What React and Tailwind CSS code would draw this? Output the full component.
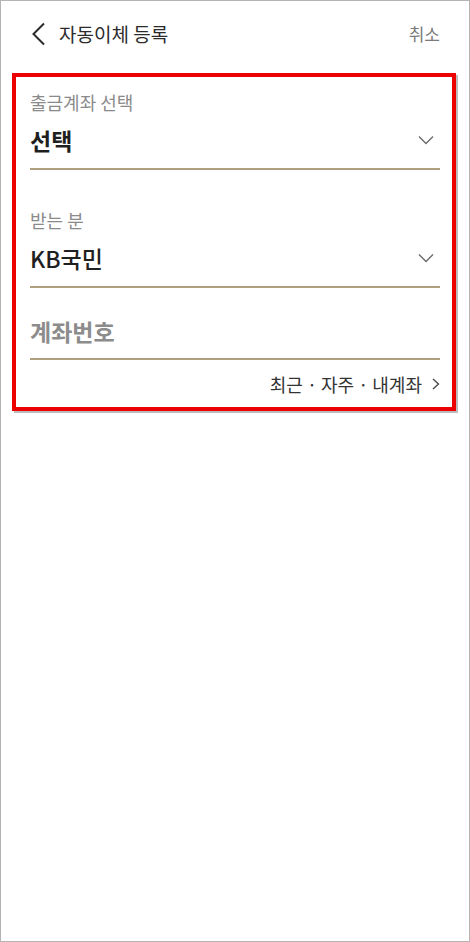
import { useState } from "react";

const FONT = { fontFamily: '"Noto Sans CJK KR", "Noto Sans", sans-serif' };

function ChevronDown() {
  return (
    <svg width="16" height="10" viewBox="0 0 16 10" fill="none" className="shrink-0">
      <path d="M1 1.5 L8 8.5 L15 1.5" stroke="#6b6b6b" strokeWidth="1.4" />
    </svg>
  );
}

function SelectField({ label, value, top, weight }) {
  return (
    <div className={top}>
      <div className="h-[24px] text-[18px] leading-[24px] text-[#8a8a8a]">{label}</div>
      <div className="mt-[11px] flex items-center justify-between border-b-2 border-[#ae9f7e] pb-[13px] pr-[6px]">
        <span className={`h-[30px] text-[23px] leading-[30px] text-[#1f1f1f] ${weight}`}>{value}</span>
        <ChevronDown />
      </div>
    </div>
  );
}

export default function App() {
  const [account, setAccount] = useState("");

  return (
    <div style={FONT} className="h-[942px] w-[470px] border border-[#b4b4b4] bg-white">
      {/* Header */}
      <div className="flex h-[72px] items-start justify-between pl-[30px] pr-[29px] pt-[19px]">
        <div className="flex items-center gap-[13px]">
          <svg width="15" height="24" viewBox="0 0 15 24" fill="none">
            <path d="M13 1.5 L2.5 12 L13 22.5" stroke="#2b2b2b" strokeWidth="2" />
          </svg>
          <span className="text-[19px] leading-[28px] text-[#2b2b2b]">자동이체 등록</span>
        </div>
        <button className="text-[17px] leading-[28px] text-[#7a7a7a]">취소</button>
      </div>

      {/* Transfer form */}
      <div className="ml-[11px] w-[444px] border-4 border-[#ec0000] pb-[11px] pl-[14px] pr-[12px] shadow-[2px_2px_0_#bdbdbd]">
        <SelectField label="출금계좌 선택" value="선택" top="pt-[13px]" weight="font-bold" />
        <SelectField label="받는 분" value="KB국민" top="mt-[38px]" weight="font-medium" />

        <div className="mt-[28px] border-b-2 border-[#ae9f7e] pb-[12px]">
          <input
            value={account}
            onChange={(e) => setAccount(e.target.value)}
            placeholder="계좌번호"
            className="h-[30px] w-full text-[23px] font-semibold leading-[30px] text-[#1f1f1f] outline-none placeholder:text-[#8c8c8c]"
          />
        </div>

        <div className="mt-[12px] flex items-center justify-end gap-[10px] text-[18px] leading-[24px] text-[#333]">
          <span>최근 · 자주 · 내계좌</span>
          <svg width="8" height="12" viewBox="0 0 8 12" fill="none">
            <path d="M1 1 L6.5 6 L1 11" stroke="#444" strokeWidth="1.3" />
          </svg>
        </div>
      </div>
    </div>
  );
}
